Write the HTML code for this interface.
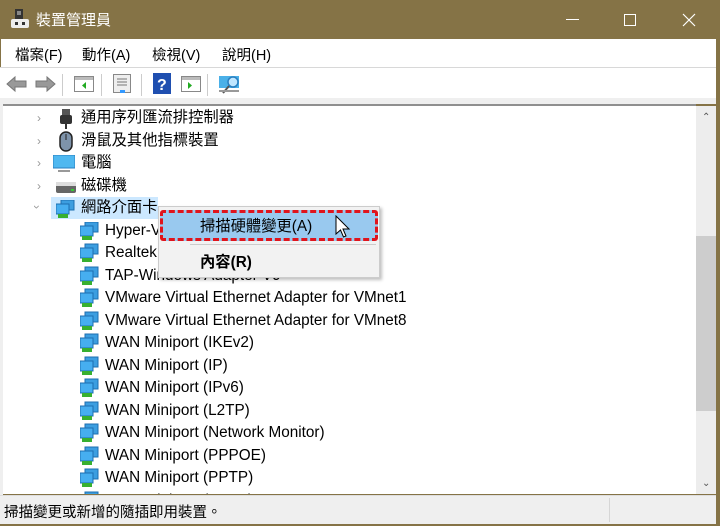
<!DOCTYPE html><html><head><meta charset="utf-8"><style>
*{margin:0;padding:0;box-sizing:border-box}
body{width:720px;height:526px;overflow:hidden;background:#fff;font-family:"Liberation Sans","Noto Sans CJK TC",sans-serif;font-size:15.3px;color:#000;position:relative}
.abs{position:absolute}
.title{left:0;top:0;width:720px;height:39px;background:#857346;color:#fff}
.menu{top:39px;left:0;width:716px;height:28px;background:#fff;border-left:1px solid #857346;font-size:14.5px}
.menu span{position:absolute;top:5px}
.tb{top:67px;left:0;width:716px;height:31px;background:#fff;border-top:1px solid #d8d8d8}
.gap{top:98px;left:0;width:716px;height:6px;background:#efefef}
.tree{top:104px;left:3px;width:693px;height:390px;border-top:2px solid #8f8f8f;background:#fff;overflow:hidden}
.row{position:absolute;height:22px;line-height:22px;white-space:nowrap}
.sb{top:106px;left:696px;width:20px;height:388px;background:#ededed}
.status{top:495px;left:0;width:716px;height:29px;background:#efefef;border-top:1px solid #ddd;font-size:14.5px}
.chev{position:absolute;color:#999;font-size:12px}
.sep{position:absolute;top:6px;width:1px;height:22px;background:#ccc}
</style></head><body>
<div class="abs" style="left:0;top:0;width:720px;height:526px;background:#857346"></div>
<div class="abs title">
<svg class="abs" style="left:11px;top:9px" width="18" height="20"><rect x="4" y="0" width="8" height="10" fill="#333"/><rect x="6" y="2" width="4" height="4" fill="#888"/><rect x="0" y="10" width="18" height="9" rx="2" fill="#eee"/><rect x="4" y="13" width="3" height="3" fill="#333"/><rect x="11" y="13" width="3" height="3" fill="#333"/></svg>
<span class="abs" style="left:36px;top:9px;font-size:15px">裝置管理員</span>
<div class="abs" style="left:566px;top:19px;width:13px;height:1px;background:#fff"></div>
<div class="abs" style="left:624px;top:14px;width:12px;height:12px;border:1px solid #fff"></div>
<svg class="abs" style="left:682px;top:13px" width="14" height="14"><path d="M1 1L13 13M13 1L1 13" stroke="#fff" stroke-width="1.2"/></svg>
</div>
<div class="abs menu"><span style="left:14px">檔案(F)</span><span style="left:81px">動作(A)</span><span style="left:151px">檢視(V)</span><span style="left:221px">說明(H)</span></div>
<div class="abs tb">
<svg class="abs" style="left:6px;top:7px" width="50" height="18"><path d="M1 9L9 2V6H20V12H9V16Z" fill="#999" stroke="#777"/><path d="M49 9L41 2V6H30V12H41V16Z" fill="#999" stroke="#777"/></svg>
<div class="sep" style="left:62px"></div>
<svg class="abs" style="left:74px;top:8px" width="20" height="16"><rect x="0.5" y="0.5" width="19" height="15" fill="#fff" stroke="#888"/><rect x="1" y="1" width="18" height="3" fill="#bbb"/><path d="M12 6L8 9.5L12 13Z" fill="#2a2"/></svg>
<div class="sep" style="left:101px"></div>
<svg class="abs" style="left:113px;top:6px" width="18" height="20"><rect x="0.5" y="0.5" width="17" height="18" fill="#eee" stroke="#888"/><path d="M4 5H14M4 8H14M4 11H14" stroke="#777"/><rect x="7" y="16" width="5" height="3" fill="#39f"/></svg>
<div class="sep" style="left:141px"></div>
<svg class="abs" style="left:153px;top:5px" width="18" height="21"><rect width="18" height="21" fill="#1f4fb0"/><text x="4" y="17" fill="#fff" font-size="16" font-family="Liberation Sans" font-weight="bold">?</text></svg>
<svg class="abs" style="left:181px;top:8px" width="20" height="16"><rect x="0.5" y="0.5" width="19" height="15" fill="#fff" stroke="#888"/><rect x="1" y="1" width="18" height="3" fill="#bbb"/><path d="M7 6L11 9.5L7 13Z" fill="#2a2"/></svg>
<div class="sep" style="left:207px"></div>
<svg class="abs" style="left:219px;top:6px" width="24" height="20"><rect x="0" y="2" width="20" height="12" fill="#4ab0e8"/><circle cx="14" cy="8" r="5" fill="#bfe6ff" stroke="#2a7fc0" stroke-width="1.5"/><path d="M10 12L4 19" stroke="#555" stroke-width="2"/><rect x="0" y="16" width="20" height="2" fill="#999"/></svg>
</div>
<div class="abs gap"></div>
<div class="abs" style="left:0;top:104px;width:3px;height:391px;background:#efefef"></div>
<div class="abs tree">
<svg width="0" height="0" style="position:absolute"><defs><g id="n"><rect x="5" y="0" width="13" height="10" fill="#3c9ee0" stroke="#1d6fb0"/><rect x="0" y="4" width="13" height="10" fill="#46aef0" stroke="#1d6fb0"/><rect x="2" y="14" width="10" height="4" fill="#38b030"/></g></defs></svg>
<div class="chev" style="left:34px;top:5px">›</div><div class="row" style="left:78px;top:1px">通用序列匯流排控制器</div>
<svg class="abs" style="left:57px;top:3px" width="12" height="20"><rect x="2" y="0" width="8" height="6" fill="#555"/><rect x="0" y="6" width="12" height="9" rx="2" fill="#333"/><rect x="5" y="15" width="2" height="5" fill="#333"/></svg>
<div class="chev" style="left:34px;top:28px">›</div><div class="row" style="left:78px;top:24px">滑鼠及其他指標裝置</div>
<svg class="abs" style="left:56px;top:25px" width="14" height="21"><rect x="1" y="1" width="12" height="19" rx="6" fill="#7e93aa" stroke="#222" stroke-width="1.5"/><path d="M7 3V9" stroke="#222"/></svg>
<div class="chev" style="left:34px;top:50px">›</div><div class="row" style="left:78px;top:46px">電腦</div>
<svg class="abs" style="left:50px;top:49px" width="22" height="18"><rect x="0" y="0" width="22" height="13" fill="#4fb8f0" stroke="#2a7fc0"/><rect x="5" y="15" width="12" height="2" fill="#999"/></svg>
<div class="chev" style="left:34px;top:73px">›</div><div class="row" style="left:78px;top:69px">磁碟機</div>
<svg class="abs" style="left:53px;top:76px" width="20" height="12"><rect x="0" y="2" width="20" height="9" rx="2" fill="#666"/><rect x="0" y="0" width="20" height="4" fill="#ddd"/><rect x="15" y="7" width="3" height="2" fill="#3c3"/></svg>
<div class="abs" style="left:48px;top:91px;width:107px;height:22px;background:#cce8ff"></div>
<div class="chev" style="left:32px;top:94px;transform:rotate(90deg)">›</div><div class="row" style="left:78px;top:91px">網路介面卡</div>
<svg class="abs" style="left:53px;top:94px" width="20" height="19"><use href="#n"/></svg>
<div class="row" style="left:102px;top:114px">Hyper-V</div>
<div class="row" style="left:102px;top:136px">Realtek</div>
<div class="row" style="left:102px;top:159px">TAP-Windows Adapter V9</div>
<div class="row" style="left:102px;top:181px">VMware Virtual Ethernet Adapter for VMnet1</div>
<div class="row" style="left:102px;top:204px">VMware Virtual Ethernet Adapter for VMnet8</div>
<div class="row" style="left:102px;top:226px">WAN Miniport (IKEv2)</div>
<div class="row" style="left:102px;top:249px">WAN Miniport (IP)</div>
<div class="row" style="left:102px;top:271px">WAN Miniport (IPv6)</div>
<div class="row" style="left:102px;top:294px">WAN Miniport (L2TP)</div>
<div class="row" style="left:102px;top:316px">WAN Miniport (Network Monitor)</div>
<div class="row" style="left:102px;top:339px">WAN Miniport (PPPOE)</div>
<div class="row" style="left:102px;top:361px">WAN Miniport (PPTP)</div>
<div class="row" style="left:102px;top:384px">WAN Miniport (SSTP)</div>
<svg class="abs" style="left:77px;top:116px" width="20" height="290"><use href="#n" y="0"/><use href="#n" y="22"/><use href="#n" y="45"/><use href="#n" y="67"/><use href="#n" y="90"/><use href="#n" y="112"/><use href="#n" y="135"/><use href="#n" y="157"/><use href="#n" y="180"/><use href="#n" y="202"/><use href="#n" y="225"/><use href="#n" y="247"/><use href="#n" y="270"/></svg>
</div>
<div class="abs sb"><div class="abs" style="left:0;top:130px;width:20px;height:175px;background:#cdcdcd"></div>
<div class="abs" style="left:6px;top:6px;color:#555;font-size:10px">⌃</div><div class="abs" style="left:6px;top:372px;color:#555;font-size:10px">⌄</div></div>
<div class="abs" style="left:158px;top:206px;width:222px;height:72px;background:#f2f2f2;border:1px solid #ccc;box-shadow:2px 2px 3px rgba(0,0,0,.25)"></div>
<div class="abs" style="left:160px;top:210px;width:218px;height:31px;background:#99c9ef;border:3px dashed #e0141c;border-radius:3px"></div>
<div class="abs" style="left:200px;top:214px">掃描硬體變更(A)</div>
<div class="abs" style="left:190px;top:244px;width:186px;height:1px;background:#ccc"></div>
<div class="abs" style="left:200px;top:250px;font-weight:bold">內容(R)</div>
<svg class="abs" style="left:335px;top:215px" width="16" height="24"><path d="M1 1V19L5.5 15L8.5 22L11 21L8 14H14Z" fill="#fff" stroke="#000"/></svg>
<div class="abs status"><span class="abs" style="left:4px;top:5px">掃描變更或新增的隨插即用裝置。</span><div class="abs" style="left:609px;top:2px;width:1px;height:24px;background:#d6d6d6"></div></div>
</body></html>
